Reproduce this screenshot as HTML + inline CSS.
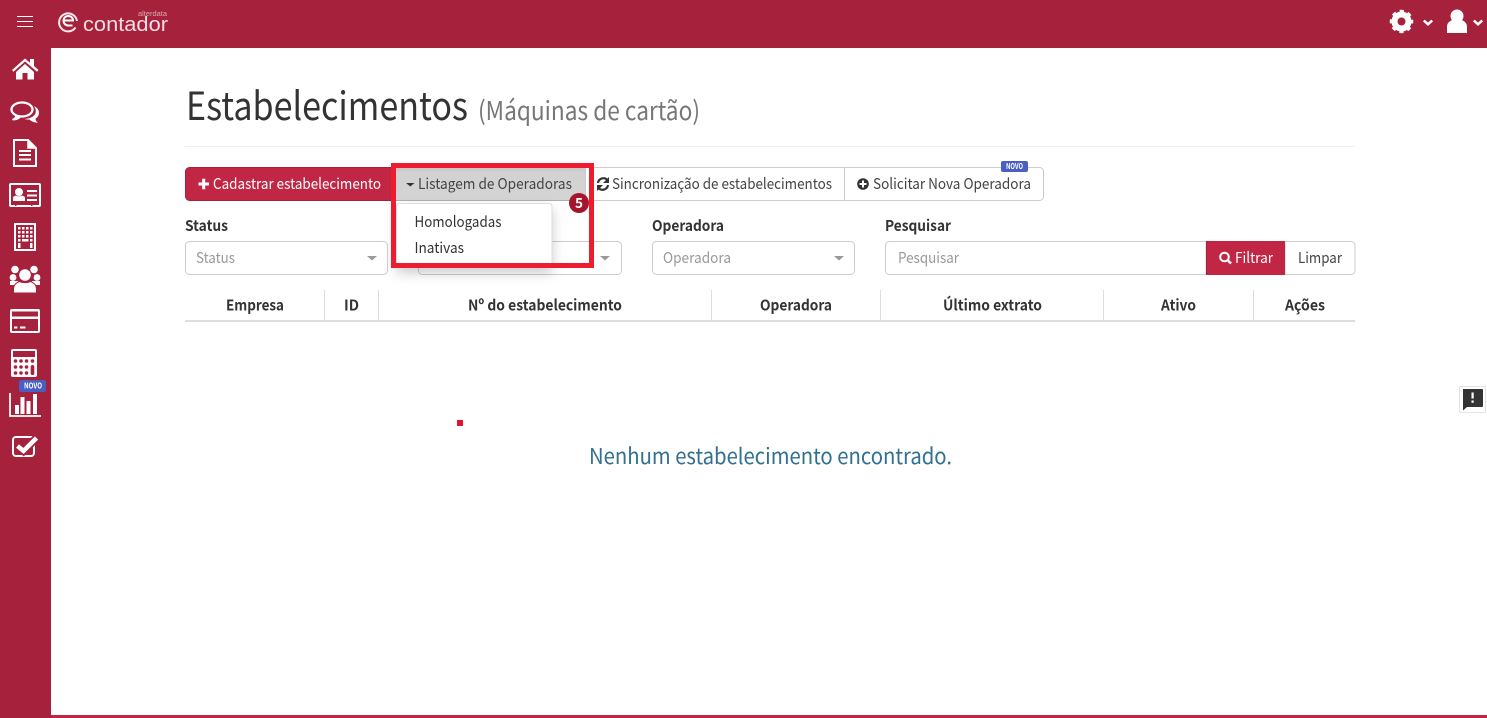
<!DOCTYPE html>
<html lang="pt-BR">
<head>
<meta charset="utf-8">
<title>Estabelecimentos</title>
<style>
html,body{margin:0;padding:0;background:#fff;overflow:hidden}
svg{display:block}
text{font-family:"Noto Sans CJK SC","Liberation Sans",sans-serif}
.b{font-weight:700}
</style>
</head>
<body>
<svg xmlns="http://www.w3.org/2000/svg" width="1487" height="718" viewBox="0 0 1487 718">
<defs>
<filter id="sh" x="-30%" y="-30%" width="160%" height="170%"><feDropShadow dx="0" dy="6" stdDeviation="6" flood-color="#000" flood-opacity=".2"/></filter>
<linearGradient id="g" x1="0" y1="0" x2="0" y2="1"><stop offset="0" stop-color="#c4c4c4"/><stop offset=".15" stop-color="#d2d2d2"/><stop offset="1" stop-color="#d4d4d4"/></linearGradient>
</defs>
<rect width="1487" height="718" fill="#fff"/>
<!-- header / sidebar -->
<rect width="1487" height="48" fill="#a6213b"/>
<rect width="51" height="718" fill="#a6213b"/>
<rect x="51" y="715" width="1436" height="3" fill="#c12744"/>
<!-- hamburger -->
<path d="M17 16.500h16M17 21.500h16M17 26.500h16" stroke="#fff" stroke-width="1"/>
<!-- logo -->
<path d="M75.500 27.500A9 9 0 1 1 77 21" fill="none" stroke="#f5e6e9" stroke-width="2"/>
<path d="M63.500 20.500h9.500c0-2.700-2-4.500-4.700-4.500s-4.800 2-4.800 4.700 2.100 4.800 5 4.800h4" fill="none" stroke="#fff" stroke-width="2"/>
<text x="83" y="31" font-size="20" fill="#f3dfe3" textLength="85" lengthAdjust="spacingAndGlyphs" style="font-family:'Liberation Sans',sans-serif">contador</text>
<text x="138" y="16" font-size="7" fill="#d9a9b3" textLength="29" lengthAdjust="spacingAndGlyphs" style="font-family:'Liberation Sans',sans-serif">alterdata</text>
<!-- gear -->
<circle cx="1401.500" cy="21.500" r="7" fill="none" stroke="#fff" stroke-width="6"/>
<circle cx="1401.500" cy="21.500" r="10" fill="none" stroke="#fff" stroke-width="3.500" stroke-dasharray="3.900 3.954" stroke-dashoffset="2"/>
<g fill="#fff">
<circle cx="1457" cy="16" r="6.500"/>
<path d="M1447 33v-6c0-4 2.500-6 5.500-7 2.500 2 6.500 2 9 0 3 1 5.500 3 5.500 7v6z"/>
</g>
<path d="M1423.800 20.500l4.200 3.800 4.200-3.800M1473.800 20.500l4.200 3.800 4.200-3.800" fill="none" stroke="#fff" stroke-width="2.500"/>
<!-- sidebar icons -->
<g fill="#fff">
<path d="M25 58.500l5 4.200v-3.700h4v7l4.500 4-1.500 1.800L25 61.500 13.500 71.800 12 70z"/>
<path d="M16 72l9-8 9 8v7.500h-6.500V73h-5v6.500H16z"/>
</g>
<g fill="none" stroke="#fff">
<ellipse cx="22" cy="109.500" rx="10.500" ry="7" stroke-width="2.300"/>
<path d="M16 115.500c0 2-1.500 3.500-3.500 4 3 .2 5.500-.5 7.500-2.500" stroke-width="1.600" fill="#fff"/>
<path d="M33.500 106c3 1 5.500 3.500 5.500 6.500 0 3-1.500 5-3.500 6 0 2 1 3.200 2.500 4.200-3.500 0-6.500-1.200-8.500-3.200-1.500.2-3.500 0-5-.5 5.500-.5 10.500-2.500 11.200-6.500.4-2.500-.2-4.800-2.200-6.500z" fill="#fff" stroke="none"/>
</g>
<g fill="none" stroke="#fff" stroke-width="2">
<path d="M14 140h14l8 8v18H14z"/><path d="M28 140v8h8" fill="#fff" stroke-width="1.500"/>
<path d="M19 151h12M19 155h12M19 159.500h12" stroke-width="2"/>
<rect x="10" y="184" width="30" height="22" rx="1"/>
</g>
<g fill="#fff">
<circle cx="19" cy="192" r="4"/>
<path d="M13 201v-3c0-1.500 1.500-2 3-2.500 1.500 1 4.500 1 6 0 1.500.5 3 1 3 2.500v3z"/>
<path d="M27 190h10v2H27zM27 194.500h10v2H27zM27 199h10v2H27z"/>
<rect x="15" y="203" width="1.500" height="3" fill="#a6213b"/><rect x="31" y="203" width="1.500" height="3" fill="#a6213b"/>
</g>
<!-- building -->
<rect x="15" y="224" width="20" height="26" fill="none" stroke="#fff" stroke-width="2"/>
<g fill="#fff">
<path d="M18 227h2.500v2.500H18zM22 227h2.500v2.500H22zM26 227h2.500v2.500H26zM30 227h2.500v2.500H30zM18 231h2.500v2.500H18zM22 231h2.500v2.500H22zM26 231h2.500v2.500H26zM30 231h2.500v2.500H30zM18 235h2.500v2.500H18zM22 235h2.500v2.500H22zM26 235h2.500v2.500H26zM30 235h2.500v2.500H30zM18 239h2.500v2.500H18zM30 239h2.500v2.500H30zM22 239h6.500v2.500H22zM18 243h2.500v5H18zM30 243h2.500v5H30z"/>
<!-- users -->
<circle cx="15" cy="269.500" r="3.800"/><circle cx="34" cy="269.500" r="3.800"/>
<circle cx="13" cy="277.500" r="3.400"/><circle cx="37" cy="277.500" r="3.400"/>
<path d="M10 281h8v4h-8zM32 281h8v4h-8z"/>
<circle cx="25" cy="275" r="6.300" stroke="#a6213b" stroke-width="1"/>
<path d="M13.500 293v-4c0-4 3-6.500 6-7.500 3 1.500 8 1.500 11 0 3 1 6 3.500 6 7.500v4z" stroke="#a6213b" stroke-width="1"/>
</g>
<!-- card -->
<rect x="10" y="309" width="30" height="24" rx="2" fill="#fff"/>
<rect x="12" y="311.500" width="26" height="5" fill="#a6213b"/>
<rect x="12" y="319" width="26" height="12" fill="#a6213b"/>
<path d="M14 326.500h3.500v2H14zM20 326.500h5.500v2H20z" fill="#fff"/>
<!-- calculator -->
<rect x="11" y="349" width="26" height="28" rx="2" fill="#fff"/>
<rect x="13" y="351" width="22" height="6" fill="#a6213b"/>
<g fill="#a6213b">
<circle cx="15.500" cy="361" r="1.800"/><circle cx="21" cy="361" r="1.800"/><circle cx="26.500" cy="361" r="1.800"/><circle cx="32.500" cy="361" r="1.800"/>
<circle cx="15.500" cy="367" r="1.800"/><circle cx="21" cy="367" r="1.800"/><circle cx="26.500" cy="367" r="1.800"/>
<circle cx="15.500" cy="373" r="1.800"/><circle cx="21" cy="373" r="1.800"/><circle cx="26.500" cy="373" r="1.800"/>
<rect x="30.700" y="365" width="3.600" height="10" rx="1.800"/>
</g>
<!-- chart -->
<path d="M10 393v23h31" fill="none" stroke="#fff" stroke-width="1.800"/>
<path d="M15 405h4v9h-4zM20.500 397h4v17h-4zM26.500 401h4v13h-4zM33 394h4v20h-4z" fill="#fff"/>
<rect x="19" y="380" width="27" height="12" rx="2" fill="#4a5fc1"/>
<text x="24" y="388.500" font-size="8" fill="#fff" class="b" textLength="18" lengthAdjust="spacingAndGlyphs">NOVO</text>
<!-- check -->
<rect x="13" y="437" width="21" height="19" rx="3" fill="none" stroke="#fff" stroke-width="2"/>
<path d="M17.500 446l6 5 13-13" fill="none" stroke="#a6213b" stroke-width="8"/>
<path d="M17.500 446l6 5 13-13" fill="none" stroke="#fff" stroke-width="4.500"/>

<!-- title -->
<text x="186" y="120" font-size="39" fill="#333" textLength="282" lengthAdjust="spacingAndGlyphs">Estabelecimentos</text>
<text x="478" y="120" font-size="26" fill="#777" textLength="222" lengthAdjust="spacingAndGlyphs">(Máquinas de cartão)</text>
<rect x="185" y="146" width="1170" height="1" fill="#eee"/>

<!-- button row -->
<path d="M189.500 167.500H396v33H189.500a4 4 0 0 1-4-4v-25a4 4 0 0 1 4-4z" fill="#c12744" stroke="#a6213b"/>
<path d="M198.500 184h10.500M203.700 178.700v10.600" stroke="#fff" stroke-width="3"/>
<text x="213" y="189" font-size="15" fill="#fff" textLength="168" lengthAdjust="spacingAndGlyphs">Cadastrar estabelecimento</text>
<rect x="395.500" y="167.500" width="190" height="33" fill="url(#g)" stroke="#adadad"/>
<path d="M406 183h8.500l-4.200 3.500z" fill="#333"/>
<text x="418" y="189" font-size="15" fill="#444" textLength="154" lengthAdjust="spacingAndGlyphs">Listagem de Operadoras</text>
<path d="M585.500 167.500H1039.500a4 4 0 0 1 4 4v25a4 4 0 0 1-4 4H585.500zM844.500 167.500v33" fill="#fff" stroke="#ccc"/>
<g fill="none" stroke="#333" stroke-width="2.200">
<path d="M598 183a5.500 5.500 0 0 1 9.500-3M608 185a5.500 5.500 0 0 1-9.500 3"/>
</g>
<path d="M609 177v6h-6zM597 191v-6h6z" fill="#333"/>
<text x="612" y="189" font-size="15" fill="#444" textLength="220" lengthAdjust="spacingAndGlyphs">Sincronização de estabelecimentos</text>
<circle cx="863" cy="184" r="5.800" fill="#333"/>
<path d="M859.500 184h7M863 180.500v7" stroke="#fff" stroke-width="2"/>
<text x="873" y="189" font-size="15" fill="#444" textLength="158" lengthAdjust="spacingAndGlyphs">Solicitar Nova Operadora</text>
<rect x="1001" y="161" width="27" height="11" rx="2" fill="#4a5fc1"/>
<text x="1006" y="169" font-size="8" fill="#fff" class="b" textLength="17" lengthAdjust="spacingAndGlyphs">NOVO</text>

<!-- filters -->
<text x="185" y="231" font-size="15" class="b" fill="#333" textLength="43" lengthAdjust="spacingAndGlyphs">Status</text>
<text x="652" y="231" font-size="15" class="b" fill="#333" textLength="72" lengthAdjust="spacingAndGlyphs">Operadora</text>
<text x="885" y="231" font-size="15" class="b" fill="#333" textLength="66" lengthAdjust="spacingAndGlyphs">Pesquisar</text>
<g fill="#fff" stroke="#ccc">
<rect x="185.500" y="241.500" width="202" height="33" rx="4"/>
<rect x="418.500" y="241.500" width="203" height="33" rx="4"/>
<rect x="652.500" y="241.500" width="202" height="33" rx="4"/>
<path d="M1206 241.500H889.500a4 4 0 0 0-4 4v25a4 4 0 0 0 4 4H1206z"/>
<path d="M1285 241.500h66a4 4 0 0 1 4 4v25a4 4 0 0 1-4 4h-66z"/>
</g>
<text x="196" y="263" font-size="15" fill="#999" textLength="39" lengthAdjust="spacingAndGlyphs">Status</text>
<text x="663" y="263" font-size="15" fill="#999" textLength="68" lengthAdjust="spacingAndGlyphs">Operadora</text>
<text x="898" y="263" font-size="15" fill="#999" textLength="61" lengthAdjust="spacingAndGlyphs">Pesquisar</text>
<path d="M367 256h10l-5 4.500zM600 256h10l-5 4.500zM834 256h10l-5 4.500z" fill="#999"/>
<rect x="1206" y="241" width="79" height="34" fill="#c12744"/>
<rect x="1206" y="241" width="1" height="34" fill="#a6213b"/>
<circle cx="1224.500" cy="257" r="4.300" fill="none" stroke="#fff" stroke-width="2"/>
<path d="M1227.500 260l3.500 3.500" stroke="#fff" stroke-width="2.500"/>
<text x="1235" y="263" font-size="15" fill="#fff" textLength="38" lengthAdjust="spacingAndGlyphs">Filtrar</text>
<text x="1298" y="263" font-size="15" fill="#444" textLength="44" lengthAdjust="spacingAndGlyphs">Limpar</text>

<!-- table head -->
<g fill="#ddd">
<rect x="324" y="290" width="1" height="30"/><rect x="378" y="290" width="1" height="30"/><rect x="711" y="290" width="1" height="30"/>
<rect x="880" y="290" width="1" height="30"/><rect x="1103" y="290" width="1" height="30"/><rect x="1253" y="290" width="1" height="30"/>
<rect x="185" y="320" width="1170" height="2"/>
</g>
<g font-size="15" fill="#333" class="b">
<text x="226" y="310.500" textLength="58" lengthAdjust="spacingAndGlyphs">Empresa</text>
<text x="344" y="310.500" textLength="15" lengthAdjust="spacingAndGlyphs">ID</text>
<text x="468" y="310.500" textLength="154" lengthAdjust="spacingAndGlyphs">Nº do estabelecimento</text>
<text x="760" y="310.500" textLength="72" lengthAdjust="spacingAndGlyphs">Operadora</text>
<text x="943" y="310.500" textLength="99" lengthAdjust="spacingAndGlyphs">Último extrato</text>
<text x="1161" y="310.500" textLength="35" lengthAdjust="spacingAndGlyphs">Ativo</text>
<text x="1285" y="310.500" textLength="40" lengthAdjust="spacingAndGlyphs">Ações</text>
</g>

<!-- dropdown -->
<rect x="396.500" y="203.500" width="155.500" height="63" rx="3" fill="#fff" stroke="#ddd" filter="url(#sh)"/>
<text x="414.500" y="227" font-size="15" fill="#333" textLength="87" lengthAdjust="spacingAndGlyphs">Homologadas</text>
<text x="414.500" y="253" font-size="15" fill="#333" textLength="49.500" lengthAdjust="spacingAndGlyphs">Inativas</text>

<!-- highlight -->
<rect x="393.500" y="165.500" width="198" height="100" fill="none" stroke="#ed1c2e" stroke-width="5"/>
<circle cx="579" cy="203" r="10" fill="#a5162c"/>
<text x="575" y="208" font-size="14" fill="#fff" class="b" textLength="8" lengthAdjust="spacingAndGlyphs">5</text>

<!-- empty state -->
<rect x="457" y="420" width="6" height="6" fill="#e0152f"/>
<text x="589" y="464" font-size="22" fill="#31708f" textLength="363" lengthAdjust="spacingAndGlyphs">Nenhum estabelecimento encontrado.</text>

<!-- feedback -->
<rect x="1459.500" y="386.500" width="26" height="26" rx="1" fill="#fff" stroke="#e4e4e4"/>
<path d="M1463 389h19a1 1 0 0 1 1 1v16a1 1 0 0 1-1 1h-15l-4 3.500z" fill="#333"/>
<path d="M1471.500 392.500h2.200v6h-2.200zM1471.500 400.500h2.200v2.200h-2.200z" fill="#fff"/>
</svg>
</body>
</html>
